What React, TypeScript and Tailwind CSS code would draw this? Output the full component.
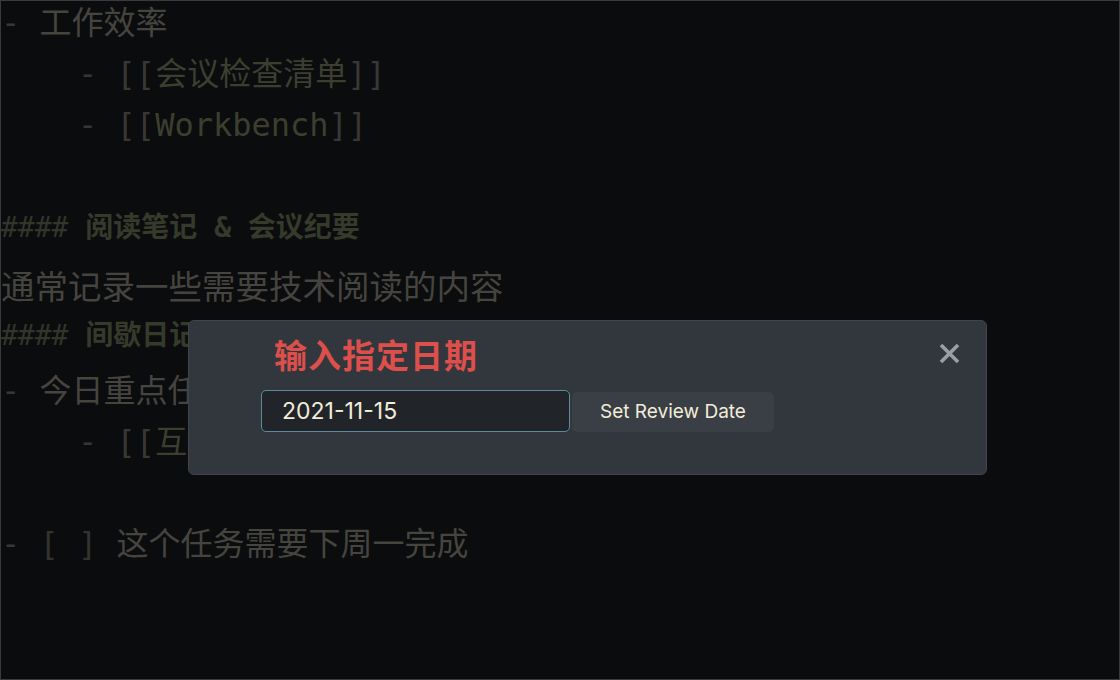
const mono = "font-['DejaVu_Sans_Mono','Noto_Sans_CJK_SC',monospace]";

const Line = ({ children, className = "" }: { children?: React.ReactNode; className?: string }) => (
  <div className={`h-[51px] leading-[51px] whitespace-pre ${className}`}>{children}</div>
);

const Bullet = () => <span className="text-[#373734]">- </span>;

const WikiLink = ({ label }: { label: string }) => (
  <>
    <span className="text-[#383835]">[[</span>
    <span className="text-[#3c3f2f]">{label}</span>
    <span className="text-[#383835]">]]</span>
  </>
);

const Heading = ({ title, className = "" }: { title: string; className?: string }) => (
  <Line className={`text-[28px] font-bold ${className}`}>
    <span className="font-normal text-[#32352a]">#### </span>
    <span className="text-[#363a2b]">{title}</span>
  </Line>
);

const ReviewDateModal = () => {
  return (
    <div className="absolute left-[187px] top-[319px] h-[155px] w-[799px] rounded-[6px] border border-[#3f454c] bg-[#31373d] pt-[13px] pl-[72px] font-['Inter','Noto_Sans_CJK_SC',sans-serif]">
      <h2 className="ml-[13px] h-[44px] text-[33px] font-bold leading-[44px] tracking-[1px] text-[#dd4f4b]">
        输入指定日期
      </h2>
      <div className="mt-[12px] flex items-center gap-[2px]">
        <input
          readOnly
          value="2021-11-15"
          className="h-[42px] w-[309px] rounded-[5px] border border-[#5b8b9b] bg-[#212529] pl-[20px] text-[23px] text-[#f3ecd9] outline-none"
        />
        <button className="mt-[2px] h-[40px] w-[202px] rounded-[5px] bg-[#393f45] text-[19px] text-[#f3ecd9]">
          Set Review Date
        </button>
      </div>
      <button className="absolute right-[25px] top-[21px] text-[#9b9fa3]">
        <svg width="23" height="23" viewBox="0 0 23 23">
          <path d="M3 3 L20 20 M20 3 L3 20" stroke="currentColor" strokeWidth="3.6" strokeLinecap="butt" />
        </svg>
      </button>
    </div>
  );
};

export default function App() {
  return (
    <div className="relative h-[680px] w-[1120px] overflow-hidden border border-[#3a3a3a] bg-[#0b0c0e]">
      <div className={`-mt-[3px] ${mono} text-[32px] text-[#46443f]`}>
        <Line>
          <Bullet />
          工作效率
        </Line>
        <Line>
          {"    "}
          <Bullet />
          <WikiLink label="会议检查清单" />
        </Line>
        <Line>
          {"    "}
          <Bullet />
          <WikiLink label="Workbench" />
        </Line>
        <Line />
        <Heading title="阅读笔记 & 会议纪要" className="mb-[6px]" />
        <Line className="font-['Noto_Sans_CJK_SC',sans-serif] text-[33.5px]">通常记录一些需要技术阅读的内容</Line>
        <Heading title="间歇日记" className="mb-[5px]" />
        <Line>
          <Bullet />
          今日重点任务
        </Line>
        <Line>
          {"    "}
          <Bullet />
          <WikiLink label="互联" />
        </Line>
        <Line />
        <Line>
          <Bullet />
          <span className="text-[#333330]">[ ] </span>
          这个任务需要下周一完成
        </Line>
      </div>
      <ReviewDateModal />
    </div>
  );
}
